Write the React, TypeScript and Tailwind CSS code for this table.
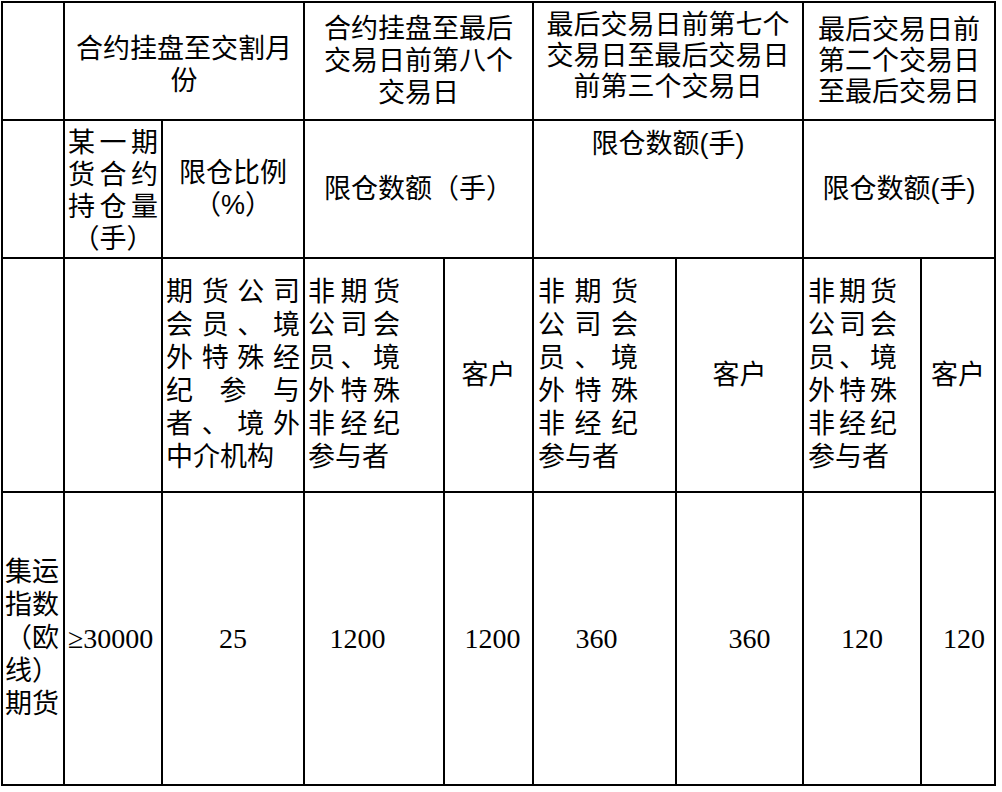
import React from 'react';
import clsx from 'clsx';

function Cell({ className, children }: { className?: string; children?: React.ReactNode }) {
  return <div className={clsx('bg-white', className)}>{children}</div>;
}

export default function App() {
  return (
    <div className="min-h-screen bg-white text-black font-['Liberation_Sans','Noto_Sans_CJK_SC',sans-serif] text-[27px]">
      <div className="ml-px mt-px inline-grid grid-cols-[60px_96px_140px_138px_87px_141px_125px_116px_72px] grid-rows-[116px_136px_232px_291px] gap-[2px] border-2 border-black bg-black">
        {/* Row 1 */}
        <Cell />
        <Cell className="col-span-2 flex items-center justify-center pt-2 text-center leading-[32px]">
          <p>
            合约挂盘至交割月
            <br />份
          </p>
        </Cell>
        <Cell className="col-span-2 flex items-center justify-center text-center leading-[32px]">
          <p>
            合约挂盘至最后
            <br />
            交易日前第八个
            <br />
            交易日
          </p>
        </Cell>
        <Cell className="col-span-2 pt-[7px] text-center leading-[31px]">
          <p>
            最后交易日前第七个
            <br />
            交易日至最后交易日
            <br />
            前第三个交易日
          </p>
        </Cell>
        <Cell className="col-span-2 flex items-center justify-center text-center leading-[31px]">
          <p>
            最后交易日前
            <br />
            第二个交易日
            <br />
            至最后交易日
          </p>
        </Cell>

        {/* Row 2 */}
        <Cell />
        <Cell className="flex items-center px-[3px] pt-[4px]">
          <p className="w-full text-justify leading-[32px] [text-align-last:center]">某一期货合约持仓量（手）</p>
        </Cell>
        <Cell className="flex items-center justify-center text-center leading-[32px]">
          <p>
            限仓比例
            <br />
            （%）
          </p>
        </Cell>
        <Cell className="col-span-2 flex items-center justify-center leading-[32px]">
          <p>限仓数额（手）</p>
        </Cell>
        <Cell className="col-span-2 pt-[7px] text-center leading-[32px]">
          <p>限仓数额(手)</p>
        </Cell>
        <Cell className="col-span-2 flex items-center justify-center leading-[32px]">
          <p>限仓数额(手)</p>
        </Cell>

        {/* Row 3 */}
        <Cell />
        <Cell />
        <Cell className="flex items-center px-[3px]">
          <p className="w-full text-justify leading-[33px]">期货公司会员、境外特殊经纪参与者、境外中介机构</p>
        </Cell>
        <Cell className="flex items-center pl-[3px]">
          <p className="w-[92px] text-justify leading-[33px]">非期货公司会员、境外特殊非经纪参与者</p>
        </Cell>
        <Cell className="flex items-center justify-center">
          <p>客户</p>
        </Cell>
        <Cell className="flex items-center pl-[4px]">
          <p className="w-[100px] text-justify leading-[33px]">非期货公司会员、境外特殊非经纪参与者</p>
        </Cell>
        <Cell className="flex items-center justify-center">
          <p>客户</p>
        </Cell>
        <Cell className="flex items-center pl-[4px]">
          <p className="w-[89px] text-justify leading-[33px]">非期货公司会员、境外特殊非经纪参与者</p>
        </Cell>
        <Cell className="flex items-center justify-center">
          <p>客户</p>
        </Cell>

        {/* Row 4 */}
        <Cell className="flex items-center pl-[2px]">
          <p className="leading-[33px]">集运指数（欧线）期货</p>
        </Cell>
        <Cell className="flex items-center pl-[3px] font-['Liberation_Serif',serif] text-[28px]">
          <p>≥30000</p>
        </Cell>
        <Cell className="flex items-center justify-center font-['Liberation_Serif',serif] text-[28px]">
          <p>25</p>
        </Cell>
        <Cell className="flex items-center justify-center pr-[33px] font-['Liberation_Serif',serif] text-[28px]">
          <p>1200</p>
        </Cell>
        <Cell className="flex items-center justify-center pl-2 font-['Liberation_Serif',serif] text-[28px]">
          <p>1200</p>
        </Cell>
        <Cell className="flex items-center justify-center pr-4 font-['Liberation_Serif',serif] text-[28px]">
          <p>360</p>
        </Cell>
        <Cell className="flex items-center justify-center pl-5 font-['Liberation_Serif',serif] text-[28px]">
          <p>360</p>
        </Cell>
        <Cell className="flex items-center justify-center font-['Liberation_Serif',serif] text-[28px]">
          <p>120</p>
        </Cell>
        <Cell className="flex items-center justify-center pl-3 font-['Liberation_Serif',serif] text-[28px]">
          <p>120</p>
        </Cell>
      </div>
    </div>
  );
}
